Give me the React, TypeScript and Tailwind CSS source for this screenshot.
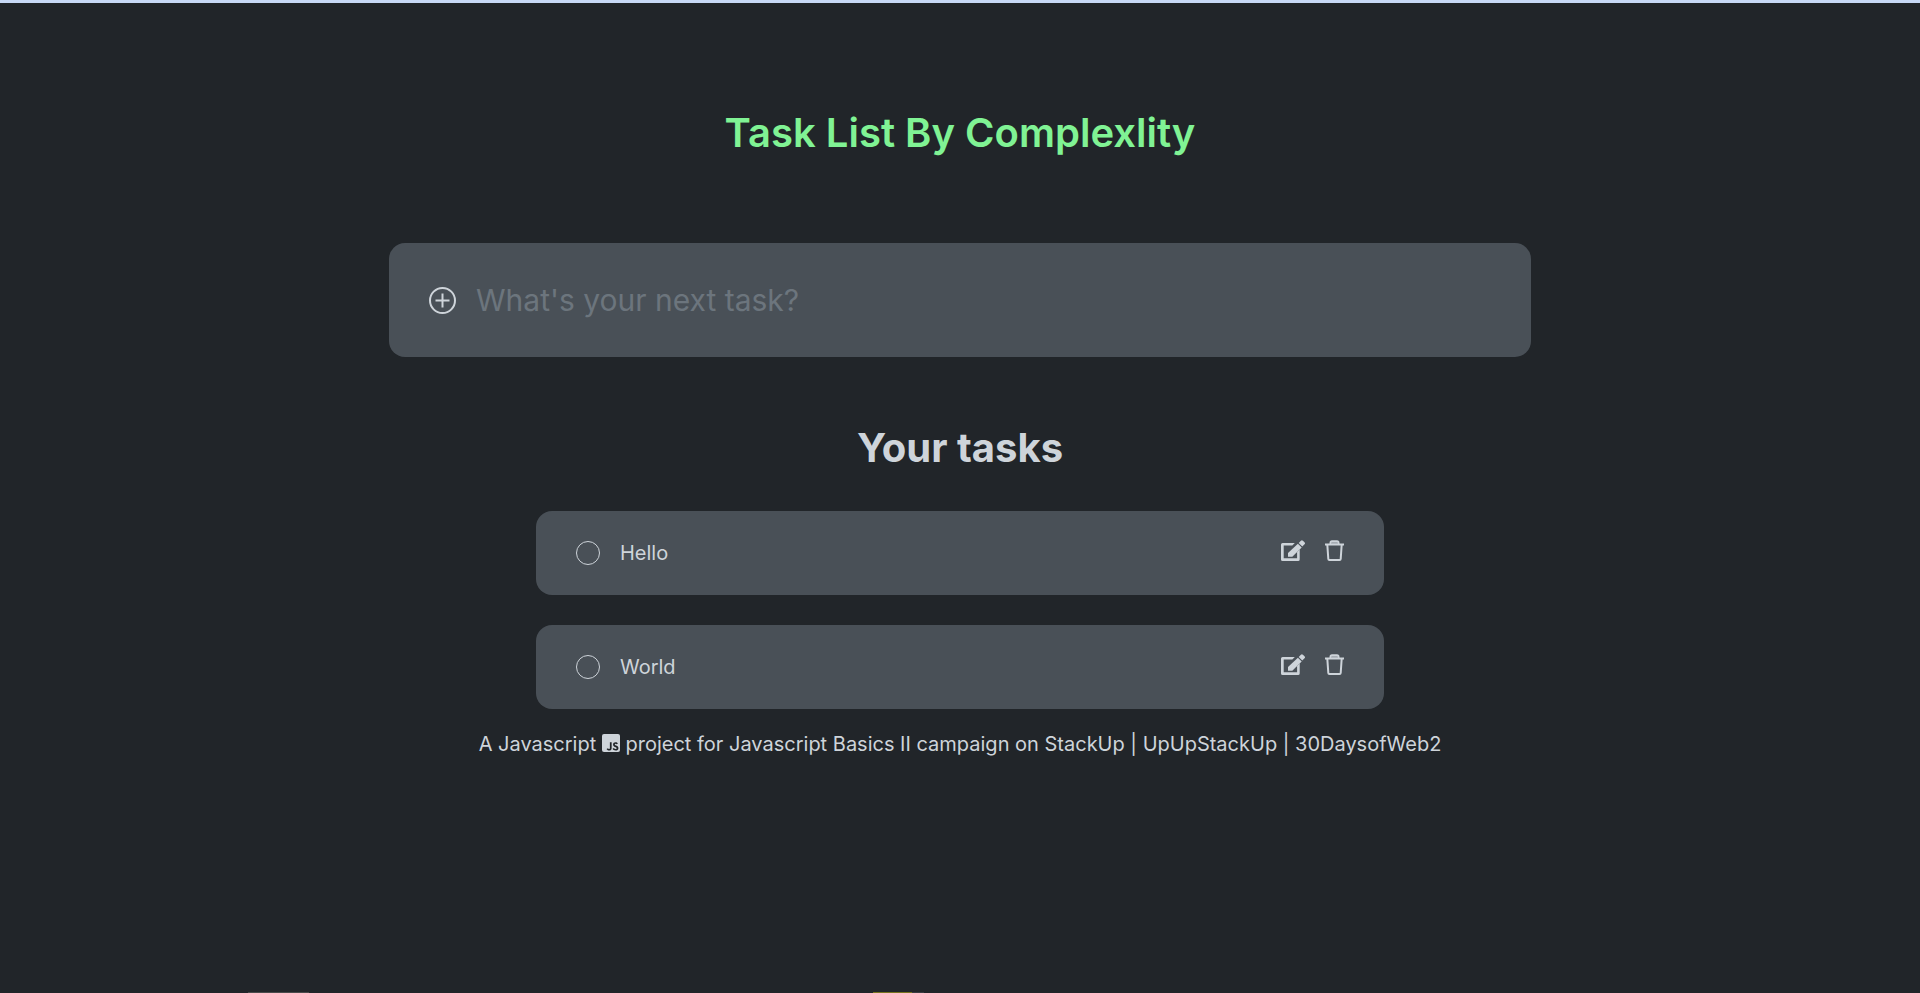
import { useState } from "react";
import { IoLogoJavascript } from "react-icons/io5";

type Task = { id: number; title: string };

const tasks: Task[] = [
  { id: 1, title: "Hello" },
  { id: 2, title: "World" },
];

function PlusCircleIcon() {
  return (
    <svg viewBox="0 0 27 27" className="size-[27px]" fill="none" stroke="currentColor" strokeWidth="2" aria-hidden="true">
      <circle cx="13.5" cy="13.5" r="12.5" />
      <path d="M13.5 6.500v14M6.500 13.500h14" />
    </svg>
  );
}

function EditIcon() {
  return (
    <svg viewBox="0 0 24 22" className="h-[22px] w-6" fill="currentColor" aria-hidden="true">
      <path d="M1.600 3h12.200l-2.500 2.500H2.700v12.700h13.400v-6.200l2.600-2.600v10a1.600 1.600 0 0 1-1.600 1.600H1.600A1.600 1.600 0 0 1 0 19.400V4.600A1.600 1.600 0 0 1 1.600 3z" />
      <path d="M16.900 3.700l3.800 3.800-9.400 9.300H7V12.900z" />
      <path d="M17.700 2.900l2.200-2.200a1.400 1.400 0 0 1 2 0l1.600 1.600a1.400 1.400 0 0 1 0 2l-2.200 2.200z" />
    </svg>
  );
}

function TrashIcon() {
  return (
    <svg viewBox="0 0 19 22" className="h-[22px] w-[19px]" fill="none" stroke="currentColor" strokeWidth="2" strokeLinejoin="round" aria-hidden="true">
      <path d="M0 4.500h19" />
      <path d="M5.500 4V3Q5.500 1.300 7 1.300h5Q13.500 1.300 13.500 3V4" />
      <path d="M6.500 3h6" strokeOpacity=".6" />
      <path d="M2.300 4.500l1 14.500Q3.400 20 4.400 20h10.200q1 0 1.100-1l1-14.500" />
    </svg>
  );
}

function TaskRow({ task }: { task: Task }) {
  return (
    <li className="flex h-[84px] items-center rounded-2xl bg-[#495057] px-10">
      <input
        id={`task-${task.id}`}
        type="checkbox"
        className="size-6 shrink-0 appearance-none rounded-full border border-[#ced4da] checked:bg-[#ced4da]"
      />
      <label htmlFor={`task-${task.id}`} className="flex-1 pl-5 text-xl">
        {task.title}
      </label>
      <div className="flex gap-5 pb-1">
        <button type="button" aria-label={`Edit ${task.title}`}>
          <EditIcon />
        </button>
        <button type="button" aria-label={`Delete ${task.title}`}>
          <TrashIcon />
        </button>
      </div>
    </li>
  );
}

export default function App() {
  const [draft, setDraft] = useState("");

  return (
    <div className="flex min-h-screen flex-col border-t-3 border-[#c8d9f6] bg-[#212529] font-['Inter',sans-serif] text-[#ced4da]">
      <main className="flex flex-1 flex-col items-center px-6 pt-[100px]">
        <h1 className="text-[40px] leading-[60px] font-semibold text-[#80f394]">Task List By Complexlity</h1>

        <form
          className="mt-20 flex h-[114px] w-full max-w-[1142px] items-center gap-5 rounded-2xl bg-[#495057] px-10"
          onSubmit={(event) => event.preventDefault()}
        >
          <button type="submit" aria-label="Add task">
            <PlusCircleIcon />
          </button>
          <input
            type="text"
            aria-label="New task"
            placeholder="What's your next task?"
            value={draft}
            onChange={(event) => setDraft(event.target.value)}
            className="min-w-0 flex-1 bg-transparent text-[30px] leading-10 outline-none placeholder:text-[#6c757d]"
          />
        </form>

        <h2 className="mt-[61px] text-[40px] leading-[60px] font-bold">Your tasks</h2>

        <ul className="mt-[33px] flex w-full max-w-[848px] flex-col gap-[30px]">
          {tasks.map((task) => (
            <TaskRow key={task.id} task={task} />
          ))}
        </ul>

        <p className="mt-5 text-center text-xl leading-[30px]">
          A Javascript{" "}
          <IoLogoJavascript
            viewBox="32 32 448 448"
            className="inline size-[18px] rounded-xs align-[-1px]"
            aria-hidden="true"
          />{" "}
          project for Javascript Basics II campaign on StackUp | UpUpStackUp | 30DaysofWeb2
        </p>
      </main>

      <div className="flex h-px" aria-hidden="true">
        <div className="w-[248px]" />
        <div className="w-[61px] bg-[#4a4b4b]" />
        <div className="w-[564px]" />
        <div className="w-[39px] bg-[#77731f]" />
        <div className="w-3 bg-[#3a3d41]" />
      </div>
    </div>
  );
}
